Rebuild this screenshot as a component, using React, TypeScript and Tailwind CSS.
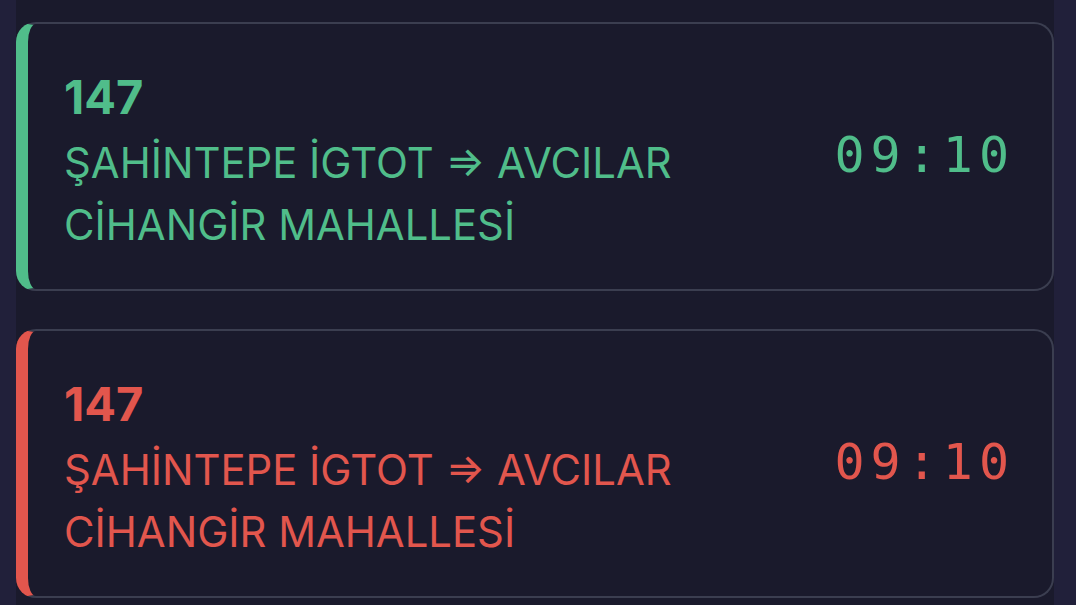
import React from "react";

const departures = [
  { line: "147", route: "ŞAHİNTEPE İGTOT ⇒ AVCILAR", stop: "CİHANGİR MAHALLESİ", time: "09:10", status: "ok" },
  { line: "147", route: "ŞAHİNTEPE İGTOT ⇒ AVCILAR", stop: "CİHANGİR MAHALLESİ", time: "09:10", status: "late" },
];

export default function App() {
  return (
    <div className="w-[1076px] h-[605px] overflow-hidden bg-[#21203a]" style={{ fontFamily: "Inter, 'Noto Sans', sans-serif" }}>
      <div className="ml-[16px] w-[1038px] h-full bg-[#1a1a2c] pt-[22px] flex flex-col gap-[38px]">
        {departures.map((d, i) => {
          const ok = d.status === "ok";
          return (
            <div
              key={i}
              className={
                ok
                  ? "flex items-center justify-between rounded-[20px] border-2 border-l-[12px] border-[#3b3e50] border-l-[#50bd8a] pl-[36px] pr-[37px] pt-[42px] pb-[33px] text-[#50bd8a]"
                  : "flex items-center justify-between rounded-[20px] border-2 border-l-[12px] border-[#3b3e50] border-l-[#e2564d] pl-[36px] pr-[37px] pt-[42px] pb-[33px] text-[#e2564d]"
              }
            >
              <div className="flex flex-col">
                <div className="text-[47px] leading-[62px] font-bold">{d.line}</div>
                <div className="text-[41.8px] leading-[62px] mt-[4px]">{d.route}</div>
                <div className="text-[41.8px] leading-[62px]">{d.stop}</div>
              </div>
              <div
                className="text-[50px] tracking-[6px] -mt-[12px]"
                style={{ fontFamily: "'DejaVu Sans Mono', monospace" }}
              >
                {d.time}
              </div>
            </div>
          );
        })}
      </div>
    </div>
  );
}
